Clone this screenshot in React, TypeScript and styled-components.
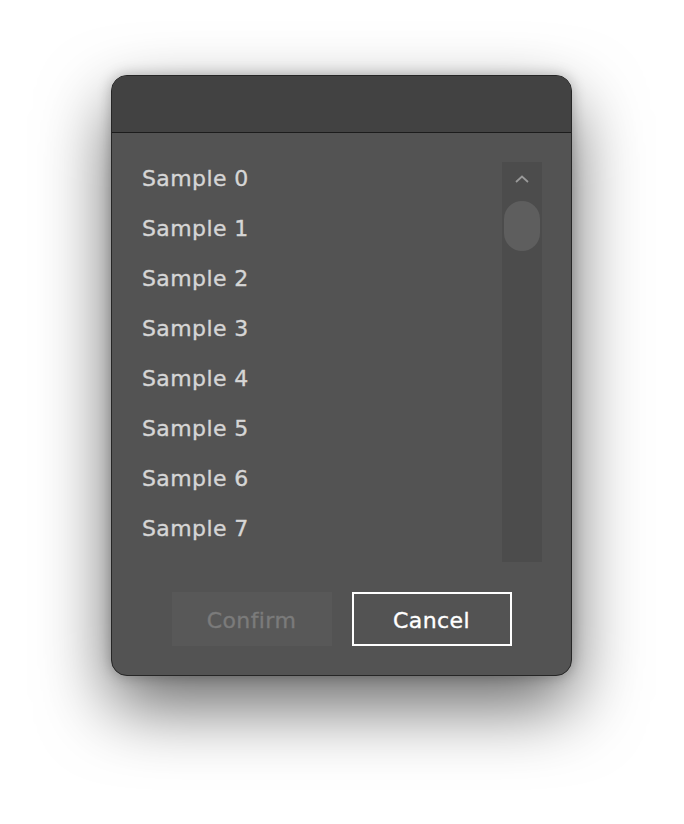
import React from "react";
import styled, { createGlobalStyle } from "styled-components";

const GlobalStyle = createGlobalStyle`
  html, body {
    margin: 0;
    padding: 0;
    background: #ffffff;
  }
  body {
    font-family: "DejaVu Sans", "Noto Sans", sans-serif;
  }
`;

const Page = styled.div`
  width: 684px;
  height: 824px;
  padding: 75px 0 0 111px;
  box-sizing: border-box;
`;

const Dialog = styled.div`
  width: 461px;
  height: 601px;
  box-sizing: border-box;
  border: 1px solid #262626;
  border-radius: 16px;
  background: #535353;
  overflow: hidden;
  display: flex;
  flex-direction: column;
  box-shadow: 0 30px 70px rgba(0, 0, 0, 0.6), 0 0 14px rgba(0, 0, 0, 0.25);
`;

const Header = styled.div`
  height: 56px;
  flex-shrink: 0;
  background: #424242;
  border-bottom: 1px solid #1c1c1c;
`;

const Body = styled.div`
  display: flex;
  padding: 29px 29px 0 30px;
`;

const List = styled.ul`
  list-style: none;
  margin: 0;
  padding: 0;
  flex: 1;
  height: 400px;
  overflow: hidden;
`;

const Item = styled.li`
  height: 50px;
  line-height: 34px;
  font-size: 22px;
  letter-spacing: 0.4px;
  color: #d6d6d6;
  -webkit-text-stroke: 0.35px #d6d6d6;
`;

const Track = styled.div`
  width: 40px;
  height: 400px;
  background: #4c4c4c;
  display: flex;
  flex-direction: column;
  align-items: center;
  padding-top: 12px;
  box-sizing: border-box;
`;

const Arrow = styled.svg`
  display: block;
  margin-bottom: 17px;
`;

const Thumb = styled.div`
  width: 36px;
  height: 50px;
  border-radius: 18px;
  background: #5e5e5e;
`;

const Footer = styled.div`
  display: flex;
  justify-content: center;
  gap: 20px;
  margin-top: 30px;
`;

const Button = styled.button<{ $outlined?: boolean }>`
  width: 160px;
  height: 54px;
  box-sizing: border-box;
  font-family: "DejaVu Sans", "Noto Sans", sans-serif;
  font-size: 22px;
  letter-spacing: 0.4px;
  padding: 2px 0 0;
  background: ${(p) => (p.$outlined ? "transparent" : "#585858")};
  color: ${(p) => (p.$outlined ? "#ffffff" : "#7b7b7b")};
  -webkit-text-stroke: 0.35px ${(p) => (p.$outlined ? "#ffffff" : "#7b7b7b")};
  border: ${(p) => (p.$outlined ? "2px solid #ffffff" : "none")};
  cursor: ${(p) => (p.$outlined ? "pointer" : "default")};
`;

const samples = Array.from({ length: 8 }, (_, i) => `Sample ${i}`);

export default function App() {
  return (
    <>
      <GlobalStyle />
      <Page>
        <Dialog>
          <Header />
          <Body>
            <List>
              {samples.map((s) => (
                <Item key={s}>{s}</Item>
              ))}
            </List>
            <Track>
              <Arrow width="16" height="10" viewBox="0 0 16 10">
                <path
                  d="M2 8 L8 2.5 L14 8"
                  fill="none"
                  stroke="#9a9a9a"
                  strokeWidth="1.8"
                />
              </Arrow>
              <Thumb />
            </Track>
          </Body>
          <Footer>
            <Button disabled>Confirm</Button>
            <Button $outlined>Cancel</Button>
          </Footer>
        </Dialog>
      </Page>
    </>
  );
}
